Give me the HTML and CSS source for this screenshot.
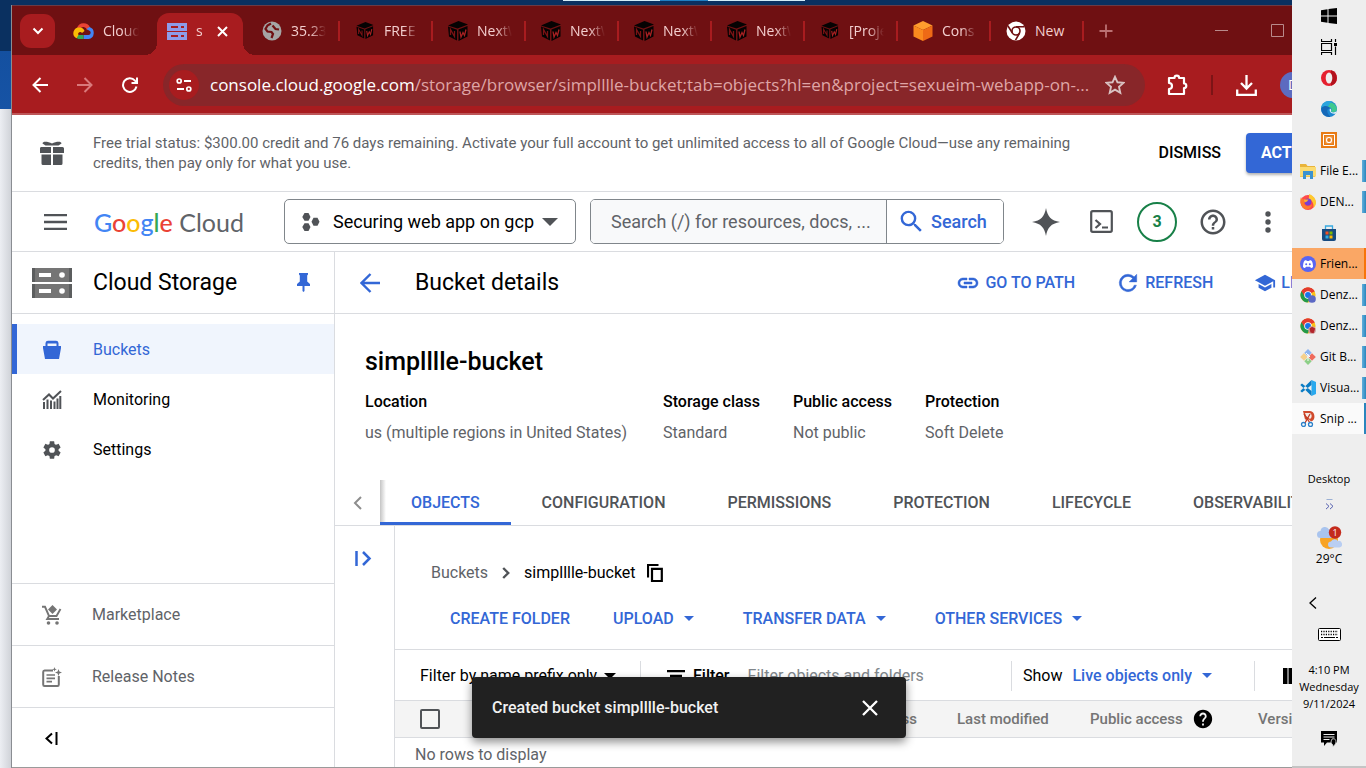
FILE: index.html
```html
<!DOCTYPE html>
<html lang="en">
<head>
<meta charset="utf-8">
<title>Bucket details – Cloud Storage</title>
<link rel="stylesheet" href="styles.css">
</head>
<body>
<svg class="defs" aria-hidden="true">
  <symbol id="nw" viewBox="0 0 20 20"><path d="M0 4.500 10.500 0 20 3.500 9.500 7.500zM0 5.500 9 8.700V19.500L1 15.500zM10.500 8.600 19.500 5V15.500L10.500 20z" fill="#050303"/><path d="M2.500 14V8.500L6.500 15.500V10" fill="none" stroke="#7a1214" stroke-width="1.300"/><path d="M12 10.500 13 16 15 11.500 16.500 14.500 18 8.500" fill="none" stroke="#a82022" stroke-width="1.300"/></symbol>
  <symbol id="drop" viewBox="0 0 10 5"><path d="M0 0h10L5 5z" fill="currentColor"/></symbol>
  <symbol id="chrome" viewBox="0 0 20 20"><circle cx="10" cy="10" r="9.500" fill="#fbc116"/><path d="M10 10 1.800 5.200A9.500 9.500 0 0 1 18.200 5.200z" fill="#e33b2e"/><path d="M10 10 1.800 5.200A9.500 9.500 0 0 0 9.500 19.500l4.100-7.400z" fill="#229a4a"/><path d="M10 5.500h8.400L18 5A9.500 9.500 0 0 0 1.800 5.200L6 12z" fill="#e33b2e"/><circle cx="10" cy="10" r="4.700" fill="#fff"/><circle cx="10" cy="10" r="3.700" fill="#1a73e8"/></symbol>
</svg>
<div class="desktop">
  <div class="peek"><i></i><i class="mid"></i><i></i></div>
  <div class="window">
    <div class="tabstrip">
      <button class="tab-search" aria-label="Search tabs"><svg width="12" height="8" viewBox="0 0 12 8"><path d="M1.500 1.500 6 6l4.500-4.500" fill="none" stroke="#fff" stroke-width="2"/></svg></button>
      <div class="tab plain"><svg width="21" height="17" viewBox="0 0 21 17"><path d="M4 6A7 7 0 0 1 17 5.500l-3 2.500a3.800 3.800 0 0 0-7-1z" fill="#ea4335"/><path d="M16.500 5A6.200 6.200 0 0 1 15.500 17H10.500V13h5a2.300 2.300 0 0 0 .5-4.500L13.500 7z" fill="#4285f4"/><path d="M10.500 17H5.500L2.500 15.500 5.500 13h5z" fill="#34a853"/><path d="M3.500 16.200A5.700 5.700 0 0 1 7 5.500a5.500 5.500 0 0 1 4.500 3.500L9 11A2 2 0 1 0 5.500 13z" fill="#fbbc05"/></svg><span>Cloud</span></div>
      <div class="tab active"><svg width="20" height="17" viewBox="0 0 20 17"><path d="M0 0h20v8H0zM0 9h20v8H0z" fill="#8e9be8"/><path d="M4 3h7v2H4zM14 3h3v2h-3zM4 12h7v2H4zM14 12h3v2h-3z" fill="#a81c1f"/></svg><span>s</span><button class="bare" aria-label="Close tab"><svg width="11" height="11" viewBox="0 0 11 11"><path d="m1 1 9 9M10 1l-9 9" stroke="#fff" stroke-width="2"/></svg></button></div>
      <div class="tab"><svg width="20" height="20" viewBox="0 0 20 20"><circle cx="10" cy="10" r="9.500" fill="#a5a5a5"/><path d="M9 2.500 5.500 4.500 3.500 8l2 2.500 4 .5 1.500 2-1.500 4M10.500 4.500l3 3.500 3.500.5" fill="none" stroke="#6f1012" stroke-width="2.200"/></svg><span>35.23</span></div>
      <div class="tab"><svg width="20" height="17"><use href="#nw"/></svg><span>FREE</span></div>
      <div class="tab"><svg width="20" height="20"><use href="#nw"/></svg><span>NextW</span></div>
      <div class="tab"><svg width="20" height="20"><use href="#nw"/></svg><span>NextW</span></div>
      <div class="tab"><svg width="20" height="20"><use href="#nw"/></svg><span>NextW</span></div>
      <div class="tab"><svg width="20" height="20"><use href="#nw"/></svg><span>NextW</span></div>
      <div class="tab"><svg width="20" height="17"><use href="#nw"/></svg><span>[Proje</span></div>
      <div class="tab"><svg width="20" height="20" viewBox="0 0 20 20"><path d="M10 0 19.500 4.500 10 9 .5 4.500z" fill="#ff9d2e"/><path d="M.5 4.500 10 9v11L.5 15.500z" fill="#fb8a1e"/><path d="M19.500 4.500 10 9v11l9.500-4.500z" fill="#ee6a16"/></svg><span>Cons</span></div>
      <div class="tab"><svg width="20" height="20" viewBox="0 0 20 20"><circle cx="10" cy="10" r="9.500" fill="#fff"/><circle cx="10" cy="10" r="4" fill="none" stroke="#6f1012" stroke-width="1.600"/><path d="M10 5.800h8.500M6.400 12 2 5M13.600 12 9.500 19.200" stroke="#6f1012" stroke-width="1.600"/></svg><span class="full">New</span></div>
      <button class="bare newtab" aria-label="New tab"><svg width="14" height="14" viewBox="0 0 14 14"><path d="M7 .5v13M.5 7h13" stroke="#bb7173" stroke-width="1.800"/></svg></button>
      <div class="winctl"><button class="bare" aria-label="Minimize"><svg width="13" height="13" viewBox="0 0 13 13"><path d="M0 6.500h13" stroke="#b98a8b"/></svg></button><button class="bare" aria-label="Maximize"><svg width="13" height="13" viewBox="0 0 13 13"><path d="M.5.5h12v12H.5z" fill="none" stroke="#b98a8b"/></svg></button></div>
    </div>
    <div class="toolbar">
      <button class="bare nav" aria-label="Back"><svg width="16" height="16" viewBox="0 0 16 16"><path d="M8.500 1 1.500 8l7 7M1.500 8H16" fill="none" stroke="#fff" stroke-width="2"/></svg></button>
      <button class="bare nav" aria-label="Forward"><svg width="16" height="16" viewBox="0 0 16 16"><path d="m7.500 1 7 7-7 7M14.500 8H0" fill="none" stroke="#d9797b" stroke-width="2"/></svg></button>
      <button class="bare nav" aria-label="Reload"><svg width="16" height="16" viewBox="0 0 16 16"><path d="M14.500 9.500A6.800 6.800 0 1 1 13 3.600L15 5.800M15 .5V6H9.500" fill="none" stroke="#fff" stroke-width="2"/></svg></button>
      <div class="omnibox">
        <button class="bare site" aria-label="Site information"><svg width="16" height="14" viewBox="0 0 16 14"><circle cx="3.200" cy="3" r="2" fill="none" stroke="#fff" stroke-width="1.700"/><circle cx="12.800" cy="11" r="2" fill="none" stroke="#fff" stroke-width="1.700"/><path d="M8 3h7M1 11h7" stroke="#fff" stroke-width="1.800"/></svg></button>
        <div class="url" role="textbox" aria-label="Address" contenteditable="true" spellcheck="false"><b>console.cloud.google.com</b>/storage/browser/simplllle-bucket;tab=objects?hl=en&amp;project=sexueim-webapp-on-...</div>
        <button class="bare" aria-label="Bookmark"><svg width="20" height="20" viewBox="0 0 20 20"><path d="m10 1.800 2.500 5.500 6 .6-4.500 4 1.300 5.900-5.300-3.100-5.300 3.100L6 11.900l-4.500-4 6-.6z" fill="none" stroke="#d9c2c2" stroke-width="1.900"/></svg></button>
      </div>
      <button class="bare" aria-label="Extensions"><svg width="22" height="22" viewBox="0 0 22 22"><path d="M2 4h5.500a2.300 2.300 0 0 1 4.600 0H17v5.500a2.300 2.300 0 0 1 0 4.600V20H2v-5a3 3 0 0 0 0-6z" fill="none" stroke="#fff" stroke-width="2.200" stroke-linejoin="round"/></svg></button>
      <i class="tsep"></i>
      <button class="bare" aria-label="Downloads"><svg width="21" height="21" viewBox="0 0 21 21"><path d="M10.500 0v13M5 8l5.500 5.500L16 8M1.200 14.500v5.300h18.600v-5.300" fill="none" stroke="#fff" stroke-width="2.300"/></svg></button>
      <button class="bare avatar" aria-label="Profile">D</button>
    </div>
    <div class="banner">
      <svg width="24" height="24" viewBox="0 0 24 24"><path d="M1 6h10v6H0V7.500A1.500 1.500 0 0 1 1 6zM13 6h9.500A1.500 1.500 0 0 1 24 7.500V12H13zM1.500 13.500H11V24H3a1.500 1.500 0 0 1-1.500-1.500zM13 13.500h9.500v9A1.500 1.500 0 0 1 21 24h-8zM2.500 2.500C2.500 0 8 .5 12 2.500 16 .5 21.500 0 21.500 2.500l-3 2h-13z" fill="#505357"/></svg>
      <p>Free trial status: $300.00 credit and 76 days remaining. Activate your full account to get unlimited access to all of Google Cloud—use any remaining credits, then pay only for what you use.</p>
      <button class="bare dismiss">DISMISS</button>
      <button class="activate">ACTIVATE</button>
    </div>
    <header class="header">
      <button class="bare burger" aria-label="Main menu"><svg width="23" height="16" viewBox="0 0 23 16"><path d="M0 1.200h23M0 8h23M0 14.800h23" stroke="#505357" stroke-width="2.300"/></svg></button>
      <a class="logo" href="#"><span class="g-b">G</span><span class="g-r">o</span><span class="g-y">o</span><span class="g-b">g</span><span class="g-g">l</span><span class="g-r">e</span> Cloud</a>
      <button class="project"><svg width="18" height="18" viewBox="0 0 18 18"><path d="M2.500 0h4L8.500 4l-2 3.800h-4L.3 4zM2.500 10.200h4l2 3.800-2 4h-4l-2.200-4zM11.500 4.800h4l2 4-2 4h-4l-2-4z" fill="#505357"/></svg><span>Securing web app on gcp</span><svg class="big" width="16" height="8"><use href="#drop"/></svg></button>
      <form class="search"><input type="text" aria-label="Search" placeholder="Search (/) for resources, docs, ..."><button type="button"><svg width="29" height="29" viewBox="0 0 24 24"><path d="M15.500 14h-.79l-.28-.27A6.471 6.471 0 0 0 16 9.500 6.500 6.500 0 1 0 9.500 16c1.610 0 3.090-.59 4.230-1.570l.27.28v.79l5 4.990L20.490 19l-4.990-5zm-6 0C7.010 14 5 11.990 5 9.500S7.010 5 9.500 5 14 7.010 14 9.500 11.990 14 9.500 14z" fill="#3367d6"/></svg>Search</button></form>
      <div class="tools">
        <button class="bare" aria-label="Gemini"><svg width="28" height="28" viewBox="0 0 28 28"><path d="M14 0c1.500 8.500 5 12.500 14 14-9 1.500-12.500 5.500-14 14C12.500 19.500 9 15.500 0 14 9 12.500 12.500 8.500 14 0z" fill="#505357"/></svg></button>
        <button class="bare" aria-label="Cloud Shell"><svg width="23" height="23" viewBox="0 0 23 23"><rect x="1.200" y="1.200" width="20.600" height="20.600" rx="1.500" fill="none" stroke="#505357" stroke-width="2.200"/><path d="m5.500 10 4.500 4-4.500 4M12 17.500h6" fill="none" stroke="#505357" stroke-width="2.200"/></svg></button>
        <button class="bare badge" aria-label="3 notifications">3</button>
        <button class="bare" aria-label="Help"><svg width="30" height="30" viewBox="0 0 24 24"><path d="M11 18h2v-2h-2v2zm1-16C6.480 2 2 6.480 2 12s4.480 10 10 10 10-4.480 10-10S17.520 2 12 2zm0 18c-4.410 0-8-3.590-8-8s3.590-8 8-8 8 3.590 8 8-3.590 8-8 8zm0-14c-2.210 0-4 1.790-4 4h2c0-1.100.9-2 2-2s2 .9 2 2c0 2-3 1.750-3 5h2c0-2.250 3-2.500 3-5 0-2.210-1.790-4-4-4z" fill="#505357"/></svg></button>
        <button class="bare" aria-label="More"><svg width="6" height="22" viewBox="0 0 6 22"><g fill="#505357"><circle cx="3" cy="3" r="2.700"/><circle cx="3" cy="11" r="2.700"/><circle cx="3" cy="19" r="2.700"/></g></svg></button>
      </div>
    </header>
    <div class="workspace">
      <aside class="sidebar">
        <div class="product"><svg width="40" height="30" viewBox="0 0 40 30"><path d="M0 0h40v14H0zM0 16h40v14H0z" fill="#757575"/><path d="M0 0h3v14H0zM37 0h3v14h-3zM0 16h3v14H0zM37 16h3v14h-3z" fill="#5b5d5e"/><path d="M7 5h12v4H7zM7 21h12v4H7z" fill="#fff"/><circle cx="30" cy="7" r="2.800" fill="#fff"/><circle cx="30" cy="23" r="2.800" fill="#fff"/></svg><h1>Cloud Storage</h1><button class="bare" aria-label="Unpin"><svg width="13" height="19" viewBox="0 0 13 19"><path d="M2 0h9v1.500l-.8 1V8.500L13 11v2H7.500v5L6.500 19l-1-1v-5H0v-2l2.800-2.500v-6L2 1.500z" fill="#3367d6"/></svg></button></div>
        <nav class="menu">
          <a href="#" class="on"><svg width="20" height="20" viewBox="0 0 20 20"><path d="M1 6h2.500V3A2.500 2.500 0 0 1 6 .8h8A2.500 2.500 0 0 1 16.500 3v3H19v2L17 19H3L1 8zM5.500 6h9V3.500h-9z" fill="#3367d6"/></svg>Buckets</a>
          <a href="#"><svg width="20" height="20" viewBox="0 0 20 20"><path d="M1 10 7 4.500l4 4L19 1" fill="none" stroke="#505357" stroke-width="2"/><path d="M2 12v7M5.500 9.500V19M9 10.500V19M12.500 11.500V19M15.500 8.500V19M18.300 6v13" stroke="#505357" stroke-width="2"/></svg>Monitoring</a>
          <a href="#"><svg width="22" height="22" viewBox="0 0 24 24"><path d="M19.140 12.940c.04-.3.060-.61.060-.94 0-.32-.02-.64-.07-.94l2.030-1.580c.18-.14.230-.41.120-.61l-1.920-3.320c-.12-.22-.37-.29-.59-.22l-2.390.96c-.5-.38-1.030-.7-1.620-.94l-.36-2.540c-.04-.24-.24-.41-.48-.41h-3.840c-.24 0-.43.170-.47.410l-.36 2.540c-.59.240-1.130.570-1.620.940l-2.390-.96c-.22-.08-.47 0-.59.220L2.740 8.870c-.12.210-.08.470.120.610l2.030 1.580c-.05.300-.09.630-.09.940s.02.640.07.940l-2.030 1.580c-.18.140-.23.410-.12.610l1.920 3.320c.12.220.37.290.59.220l2.390-.96c.5.380 1.030.7 1.620.94l.36 2.540c.05.240.24.410.48.410h3.840c.24 0 .44-.17.470-.41l.36-2.540c.59-.24 1.130-.56 1.620-.94l2.390.96c.22.08.47 0 .59-.22l1.920-3.320c.12-.22.07-.47-.12-.61l-2.010-1.580zM12 15.100a3.100 3.100 0 1 1 0-6.200 3.100 3.100 0 0 1 0 6.200z" fill="#505357"/></svg>Settings</a>
        </nav>
        <nav class="menu lower">
          <a href="#"><svg width="20" height="20" viewBox="0 0 20 20"><path d="M0 1.800h3L7 11h7.500l4-7M7 11l-1.800 3H17" fill="none" stroke="#757575" stroke-width="1.900"/><path d="M10.500 0 15 4.500 10.500 9 6 4.500z" fill="#757575"/><circle cx="6.500" cy="18" r="1.800" fill="#757575"/><circle cx="15" cy="18" r="1.800" fill="#757575"/></svg>Marketplace</a>
          <a href="#"><svg width="20" height="20" viewBox="0 0 20 20"><path d="M11 3.500H2.500Q1.200 3.500 1.200 5v12.500Q1.200 19 2.500 19h13q1.300 0 1.300-1.500V9" fill="none" stroke="#757575" stroke-width="2"/><path d="M4.500 8H13M4.500 11.300H13M4.500 14.600H10" stroke="#757575" stroke-width="1.700"/><path d="m12.500 0 .6 1.700 1.700.6-1.700.6-.6 1.700-.6-1.700-1.700-.6 1.700-.6zM16.500 2l.9 2.600L20 5.500l-2.600.9-.9 2.600-.9-2.600-2.600-.9 2.600-.9z" fill="#757575"/></svg>Release Notes</a>
          <button class="bare" aria-label="Collapse menu"><svg width="14" height="13" viewBox="0 0 14 13"><path d="M7 1.500 1.500 6.500l5.500 5M11.500 0v13" fill="none" stroke="#000" stroke-width="2"/></svg></button>
        </nav>
      </aside>
      <main class="main">
        <div class="pagebar">
          <button class="bare" aria-label="Back"><svg width="20" height="20" viewBox="0 0 20 20"><path d="m10.500 1-9 9 9 9M1.500 10H20" fill="none" stroke="#3367d6" stroke-width="2.400"/></svg></button>
          <h2>Bucket details</h2>
          <div class="pageacts">
            <button class="bare act"><svg width="24" height="24" viewBox="0 0 24 24"><path d="M3.900 12c0-1.710 1.390-3.100 3.100-3.100h4V7H7c-2.760 0-5 2.240-5 5s2.240 5 5 5h4v-1.900H7c-1.710 0-3.100-1.390-3.100-3.100zM8 13h8v-2H8v2zm9-6h-4v1.900h4c1.710 0 3.100 1.390 3.100 3.100s-1.390 3.100-3.100 3.100h-4V17h4c2.760 0 5-2.240 5-5s-2.240-5-5-5z" fill="currentColor" stroke="currentColor" stroke-width=".5"/></svg>GO TO PATH</button>
            <button class="bare act"><svg width="24" height="24" viewBox="1 1 22 22"><path d="M17.650 6.350A7.958 7.958 0 0 0 12 4a8 8 0 1 0 7.730 10h-2.080A5.990 5.990 0 0 1 12 18c-3.310 0-6-2.690-6-6s2.690-6 6-6c1.660 0 3.140.69 4.220 1.780L13 11h7V4l-2.350 2.350z" fill="currentColor" stroke="currentColor" stroke-width=".4"/></svg>REFRESH</button>
            <button class="bare act"><svg width="22" height="22" viewBox="0 0 24 24"><path d="M5 13.180v4L12 21l7-3.820v-4L12 17l-7-3.820zM12 3L1 9l11 6 9-4.910V17h2V9L12 3z" fill="currentColor"/></svg>LEARN</button>
          </div>
        </div>
        <section class="summary">
          <h3>simplllle-bucket</h3>
          <dl>
            <div><dt>Location</dt><dd>us (multiple regions in United States)</dd></div>
            <div><dt>Storage class</dt><dd>Standard</dd></div>
            <div><dt>Public access</dt><dd>Not public</dd></div>
            <div><dt>Protection</dt><dd>Soft Delete</dd></div>
          </dl>
        </section>
        <div class="tabs">
          <button class="bare prev" aria-label="Scroll tabs left"><svg width="9" height="14" viewBox="0 0 9 14"><path d="M8 1 2 7l6 6" fill="none" stroke="#8d8d8d" stroke-width="2"/></svg></button>
          <div class="tablist" role="tablist">
            <button role="tab" class="bare on" aria-selected="true">OBJECTS</button><button role="tab" class="bare">CONFIGURATION</button><button role="tab" class="bare">PERMISSIONS</button><button role="tab" class="bare">PROTECTION</button><button role="tab" class="bare">LIFECYCLE</button><button role="tab" class="bare">OBSERVABILITY</button>
          </div>
        </div>
        <div class="pane">
          <div class="rail"><button class="bare" aria-label="Show folder browser"><svg width="17" height="15" viewBox="0 0 17 15"><path d="M1.500 0v15M8 1l6.500 6.500L8 14" fill="none" stroke="#3367d6" stroke-width="2.500"/></svg></button></div>
          <div class="objects">
            <div class="crumbs"><a href="#">Buckets</a><svg width="8" height="12" viewBox="0 0 8 12"><path d="m1.200 1 5 5-5 5" fill="none" stroke="#505357" stroke-width="2.400"/></svg><span>simplllle-bucket</span><button class="bare" aria-label="Copy"><svg width="16" height="18" viewBox="0 0 16 18"><path d="M1 13.500V1h10.500M5 4.800h9.800V17H5z" fill="none" stroke="#000" stroke-width="2.200"/></svg></button></div>
            <div class="actions">
              <button class="bare act">CREATE FOLDER</button>
              <button class="bare act">UPLOAD<svg width="10" height="5"><use href="#drop"/></svg></button>
              <button class="bare act">TRANSFER DATA<svg width="10" height="5"><use href="#drop"/></svg></button>
              <button class="bare act">OTHER SERVICES<svg width="10" height="5"><use href="#drop"/></svg></button>
            </div>
            <div class="filters">
              <div class="pick prefix"><select aria-label="Filter mode"><option>Filter by name prefix only</option></select><svg width="12" height="6"><use href="#drop"/></svg></div>
              <label class="filter"><svg width="18" height="12" viewBox="0 0 18 12"><path d="M0 1.200h18M3 5.800h12M6 10.400h6" stroke="#000" stroke-width="2.200"/></svg><b>Filter</b><input type="text" placeholder="Filter objects and folders"></label>
              <div class="pick show"><label for="show">Show</label><select id="show"><option>Live objects only</option></select><svg width="10" height="5"><use href="#drop"/></svg></div>
              <button class="bare cols" aria-label="Column display"><svg width="18" height="16" viewBox="0 0 18 16"><path d="M0 0h4.500v16H0zM5.500 0h5v16h-5zM11.500 0h5v16h-5z"/></svg></button>
            </div>
            <table>
              <colgroup><col class="c-box"><col class="c-name"><col class="c-class"><col class="c-mod"><col class="c-pub"><col></colgroup>
              <thead><tr><th><input type="checkbox" aria-label="Select all"></th><th aria-label="Name"></th><th>Storage class</th><th>Last modified</th><th><span class="with-help">Public access<svg width="22" height="22" viewBox="0 0 24 24"><path d="M12 2C6.480 2 2 6.480 2 12s4.480 10 10 10 10-4.480 10-10S17.520 2 12 2zm1 17h-2v-2h2v2zm2.070-7.750l-.9.920C13.450 12.900 13 13.500 13 15h-2v-.5c0-1.100.45-2.100 1.170-2.830l1.240-1.260c.37-.36.59-.86.59-1.410 0-1.100-.9-2-2-2s-2 .9-2 2H8c0-2.210 1.790-4 4-4s4 1.790 4 4c0 .88-.36 1.680-.93 2.250z"/></svg></span></th><th>Version history</th></tr></thead>
              <tbody><tr><td colspan="6">No rows to display</td></tr></tbody>
            </table>
          </div>
        </div>
      </main>
    </div>
    <div class="toast" role="status"><span>Created bucket simplllle-bucket</span><button class="bare" aria-label="Close"><svg width="16" height="16" viewBox="0 0 16 16"><path d="m1 1 14 14M15 1 1 15" stroke="#fff" stroke-width="2.300"/></svg></button></div>
  </div>
</div>
<aside class="taskbar">
  <div class="apps">
    <button aria-label="Start" class="solo"><svg width="16" height="16" viewBox="0 0 16 16"><path d="M0 2.200 6.500 1.200V7.500H0zM7.500 1 16 0v7.500H7.500zM0 8.500h6.500v6.300L0 13.800zM7.500 8.500H16V16l-8.500-1z"/></svg></button>
    <button aria-label="Task view" class="solo"><svg width="16" height="16" viewBox="0 0 16 16"><path d="M.5 0v2.500h10V0M.5 16v-2.500h10V16M.5 4.500h10v7H.5zM14.500 0v3M14.500 7.500V16" fill="none" stroke="#000" stroke-width="1.200"/><path d="M13 4h3v3h-3z"/></svg></button>
    <button aria-label="Opera" class="solo"><svg width="16" height="16" viewBox="0 0 16 16"><circle cx="8" cy="8" r="8" fill="#e5202f"/><path d="M10 .3a8 8 0 0 1 0 15.400z" fill="#b3121d"/><ellipse cx="8" cy="8" rx="3.300" ry="5.500" fill="#eee"/></svg></button>
    <button aria-label="Edge" class="solo"><svg width="16" height="16" viewBox="0 0 16 16"><circle cx="8" cy="8" r="8" fill="#1c86d1"/><path d="M.3 7A8 8 0 0 1 16 8c0 3-3.500 4-6 2.500 1.500-1.500.5-4.500-2.500-4.500S2 6.500.3 7z" fill="#3fc98f"/><path d="M.3 7C.5 3 4 0 8 0c2 0 3 .5 4 1C8 1.500 9 4 7 5.500 4.500 5.500 2 6 .3 7z" fill="#2aa5dd"/><path d="M.3 7C3 4 8 4.500 9 7.500 5.500 7 5 12 9.500 15.800A8 8 0 0 1 .3 7z" fill="#1568b8"/><path d="M9 7.500c1.500.8 1.500 2.300.7 3 2 1.500 4.600 1 6-.5l-1 2.500C11 13.500 7.500 11 9 7.500z" fill="#e6f4f4"/></svg></button>
    <button aria-label="Processor tool" class="solo"><svg width="16" height="16" viewBox="0 0 16 16"><path d="M0 0h16v16H0z" fill="#e87b15"/><path d="M2.500 2.500h11v11h-11z" fill="none" stroke="#fff"/><path d="M4.500 4.500h7v7h-7z" fill="#f3a45a"/><circle cx="8" cy="8" r="2.500" fill="#e87b15" stroke="#fff" stroke-width="1.200"/></svg></button>
    <button class="run"><svg width="16" height="16" viewBox="0 0 16 16"><path d="M0 1h6l1.500 2H15v11H0z" fill="#e9b43a"/><path d="M0 4h16v9.500H0z" fill="#fbdb71"/><path d="M3 16V8h10v8h-3v-4H6v4z" fill="#3b92cf"/></svg><span>File E...</span></button>
    <button class="run"><svg width="16" height="16" viewBox="0 0 16 16"><circle cx="8" cy="8.500" r="7.500" fill="#ff4a4a"/><path d="M9 0c3 1 7 4 7 8.500 0 2-1 4-2.500 5.500C14 9 12 6 8.500 4.500 9.500 3 9 1 9 0z" fill="#ffc92f"/><path d="M1 3c0 2 2 2.500 5 3L4 9c1 4 6 4 8 1 0 4-4 6-7 5S-1 8 1 3z" fill="#ff7a2a"/><circle cx="8" cy="8" r="3.400" fill="#7a3fd0"/><path d="M4 5.500h4.500L7 7.500 4.500 8.500z" fill="#ffb02e"/></svg><span>DEN...</span></button>
    <button aria-label="Store" class="solo"><svg width="16" height="16" viewBox="0 0 16 16"><path d="M1 4h14v10q0 2-2 2H3q-2 0-2-2z" fill="#174b80"/><path d="M4.500 4V1h7v3" fill="none" stroke="#38a9e0" stroke-width="1.300"/><path d="M4.500 6.500h3v3h-3z" fill="#f25022"/><path d="M8.500 6.500h3v3h-3z" fill="#7fba00"/><path d="M4.500 10.500h3v3h-3z" fill="#29abe2"/><path d="M8.500 10.500h3v3h-3z" fill="#ffb900"/></svg></button>
    <button class="run alert"><svg width="16" height="16" viewBox="0 0 16 16"><circle cx="8" cy="8" r="8" fill="#5865f2"/><path d="M3 11c0-3 .5-5 1.500-6.200C6 4 6.500 4.200 7 5h2c.5-.8 1-1 2.500-.2C12.500 6 13 8 13 11c-1 1-2 1.200-2.500.5L10 10.700H6l-.5.8C5 12.200 4 12 3 11z" fill="#fff"/><circle cx="6.200" cy="8.300" r="1" fill="#5865f2"/><circle cx="9.800" cy="8.300" r="1" fill="#5865f2"/></svg><span>Frien...</span></button>
    <button class="run"><svg width="16" height="16" viewBox="0 0 20 20"><use href="#chrome" width="20" height="20"/><circle cx="15" cy="15" r="4.800" fill="#5b68c4"/></svg><span>Denz...</span></button>
    <button class="run"><svg width="16" height="16" viewBox="0 0 20 20"><use href="#chrome" width="20" height="20"/><circle cx="15" cy="15" r="4.800" fill="#c99"/><path d="m12 13 3-2 4 2-2 6-4-1z" fill="#b3252b"/></svg><span>Denz...</span></button>
    <button class="run"><svg width="16" height="16" viewBox="0 0 16 16"><path d="m8 0 3.700 3.700L8 7.400 4.300 3.700z" fill="#8cb4f0"/><path d="m4 4 3.700 4L4 11.700.2 8z" fill="#f5d08c"/><path d="M12 4.300 15.800 8 12 11.700 8.300 8z" fill="#ef6a5c"/><path d="M8 8.600 11.700 12.300 8 16 4.300 12.300z" fill="#8dcf87"/><path d="m6 4 4 4M8 5v7" stroke="#fff"/></svg><span>Git B...</span></button>
    <button class="run"><svg width="16" height="16" viewBox="0 0 16 16"><path d="M11.500 0 16 2v12l-4.500 2z" fill="#29a9ee"/><path d="M11.500 0v5L2 12.500.3 11zM11.500 16v-5L2 3.500.3 5z" fill="#0a7cc4"/></svg><span>Visua...</span></button>
    <button class="run front"><svg width="16" height="16" viewBox="0 0 16 16"><path d="M3 0h7a5.500 5.500 0 0 1 1 10.500L9 8.500H5z" fill="#d04a2c"/><path d="M5 2h5a3.500 3.500 0 0 1 0 6L6 5z" fill="#f3e9e4"/><path d="m4 3 6 9M10 3 5 12" stroke="#c23a22" stroke-width="1.300"/><circle cx="3.500" cy="13.500" r="2" fill="none" stroke="#2b80c9" stroke-width="1.300"/><circle cx="10.500" cy="13.500" r="2" fill="none" stroke="#2b80c9" stroke-width="1.300"/></svg><span>Snip ...</span></button>
  </div>
  <div class="tray">
    <span>Desktop</span>
    <button class="bare more" aria-label="More toolbars"><svg width="9" height="11" viewBox="0 0 9 11"><path d="M1.500.5h6" stroke="#9bb0d4"/><path d="m1 4.500 3 2.800-3 2.800M5 4.500l3 2.800-3 2.800" fill="none" stroke="#5560b0"/></svg></button>
    <svg class="weather" width="25" height="24" viewBox="0 0 25 24"><circle cx="12" cy="14" r="9" fill="#f8a325"/><path d="M3.500 12a3.500 3.500 0 0 1 0-7A4.500 4.500 0 0 1 12 3.500 4.200 4.200 0 0 1 14 12z" fill="#a9c4ee"/><path d="M14 21.500a3 3 0 0 1 0-6 4 4 0 0 1 7-.5 3.300 3.300 0 0 1 1.500 6.500z" fill="#b9cef2"/><circle cx="18" cy="6.500" r="6.200" fill="#c42b1c"/><text x="18" y="10" fill="#fff" font-size="9" text-anchor="middle">1</text></svg>
    <span class="temp">29°C</span>
    <button class="bare chev" aria-label="Show hidden icons"><svg width="8" height="12" viewBox="0 0 8 12"><path d="M7 .5 1 6l6 5.500" fill="none" stroke="#000" stroke-width="1.300"/></svg></button>
    <svg class="kbd" width="23" height="13" viewBox="0 0 23 13"><rect x=".5" y=".5" width="22" height="12" rx="1" fill="#fff" stroke="#000"/><path d="M3 3.500h17M3 6.500h17" stroke="#000" stroke-width="1.300" stroke-dasharray="1.200 1.200"/><path d="M3 9.500h2M6 9.500h11M18 9.500h2" stroke="#000"/></svg>
    <time>4:10 PM<br>Wednesday<br>9/11/2024</time>
    <svg class="notif" width="16" height="17" viewBox="0 0 16 17"><path d="M0 0h16v11.500H6L3 15v-3.500H0z"/><path d="M2.500 3.500h11M2.500 6h11M2.500 8.500h6" stroke="#eee"/><path d="M11 8c3-1 4 1 4 3s-2 4.500-4 5c1.500-1.500 1-2 0-3s-1.500-2 0-5z" stroke="#eee" stroke-width=".8"/></svg>
  </div>
</aside>
</body>
</html>
```
FILE: styles.css
```css
* { box-sizing: border-box; }
body {
  margin: 0;
  height: 100vh;
  display: flex;
  overflow: hidden;
  font: 16px/20px Roboto, sans-serif;
  color: #000;
}
h1, h2, h3, p, dl, dd { margin: 0; }
a { color: inherit; text-decoration: none; }
svg { flex: none; display: block; }
button, input, select { font: inherit; color: inherit; }
button { cursor: pointer; }
.defs { position: absolute; width: 0; height: 0; }
.bare {
  border: 0;
  padding: 0;
  background: none;
  display: flex;
  align-items: center;
  justify-content: center;
  flex: none;
  white-space: nowrap;
}

/* Desktop behind the browser window */
.desktop {
  position: relative;
  flex: 1;
  min-width: 0;
  padding: 5px 0 0 12px;
  background:
    linear-gradient(#1450a0, #1653a5) 0 51px / 12px 58px no-repeat,
    linear-gradient(90deg, #eceef3, #cdd0d6) 0 109px / 12px 100% no-repeat,
    #0a3060;
}
.peek {
  position: absolute;
  top: 0;
  left: 563px;
  display: flex;
  height: 1px;
}
.peek i { width: 97px; background: #d3ecf8; }
.peek .mid { width: 48px; background: #1f7fc2; }
.window {
  position: relative;
  display: flex;
  flex-direction: column;
  height: 100%;
  overflow: hidden;
  background: #fff;
  border-bottom: 1px solid #9a9a9a;
  box-shadow: -1px 0 #8a8d92;
}

/* Browser chrome */
.tabstrip, .toolbar, .url, .taskbar { font-family: "Open Sans", "Noto Sans", sans-serif; }
.tabstrip {
  flex: none;
  display: flex;
  align-items: center;
  height: 50px;
  padding-left: 8px;
  background: #6f1012;
  border-top: 1px solid #6b3a45;
}
.tab-search {
  display: flex;
  align-items: center;
  justify-content: center;
  width: 35px;
  height: 34px;
  margin-right: 3px;
  border: 0;
  border-radius: 11px;
  background: #a81c1f;
  flex: none;
}
.tab {
  position: relative;
  display: flex;
  align-items: center;
  gap: 9px;
  width: 93px;
  height: 20px;
  padding: 0 12px 0 15px;
  flex: none;
  font-size: 14px;
  color: #f3cfcf;
  border-right: 2px solid #a81c1f;
}
.tab span {
  flex: 1;
  min-width: 0;
  overflow: hidden;
  white-space: nowrap;
  -webkit-mask-image: linear-gradient(90deg, #000 55%, transparent);
  mask-image: linear-gradient(90deg, #000 55%, transparent);
}
.tab .full { -webkit-mask-image: none; mask-image: none; }
.tab.plain { border: 0; }
.tab.active {
  align-self: flex-end;
  width: 86px;
  height: 42px;
  margin: 0 4px 0 6px;
  padding: 0 15px 6px 10px;
  border: 0;
  border-radius: 12px 12px 0 0;
  background: #a81c1f;
}
.tab.active::before, .tab.active::after {
  content: "";
  position: absolute;
  bottom: 0;
  width: 12px;
  height: 12px;
}
.tab.active::before { left: -12px; background: radial-gradient(circle at 0 0, transparent 12px, #a81c1f 12px); }
.tab.active::after { right: -12px; background: radial-gradient(circle at 100% 0, transparent 12px, #a81c1f 12px); }
.newtab { margin-left: 15px; }
.winctl { display: flex; gap: 43px; margin-left: auto; padding-right: 8px; }
.toolbar {
  flex: none;
  display: flex;
  align-items: center;
  height: 60px;
  padding: 2px 0 0 5px;
  background: #a81c1f;
  border-bottom: 2px solid #bd5658;
}
.nav { width: 45px; height: 40px; }
.omnibox {
  display: flex;
  align-items: center;
  flex: 1;
  min-width: 0;
  height: 42px;
  margin: 0 22px 0 11px;
  padding: 0 20px 0 6px;
  border-radius: 21px;
  background: #882629;
}
.site { width: 30px; height: 30px; border-radius: 15px; background: #a81c1f; }
.url {
  flex: 1;
  min-width: 0;
  margin: 0 6px 0 11px;
  font-size: 17px;
  line-height: 24px;
  color: #dfa5a6;
  white-space: nowrap;
  overflow: hidden;
  outline: 0;
}
.url b { font-weight: 400; color: #fff; }
.tsep { width: 2px; height: 20px; margin: 0 23px 0 22px; background: #7c1416; }
.avatar {
  width: 26px;
  height: 26px;
  margin: 0 -14px 0 23px;
  border-radius: 13px;
  background: #5c6bc0;
  color: #fff;
  font-size: 14px;
}

/* Trial banner */
.banner {
  flex: none;
  display: flex;
  align-items: center;
  height: 77px;
  padding-left: 28px;
  border-bottom: 1px solid #dadce0;
}
.banner p {
  flex: 1;
  max-width: 1000px;
  margin: 0 auto 0 29px;
  font-size: 15px;
  color: #5f6368;
}
.dismiss { margin: 0 25px 0 40px; font-weight: 500; }
.activate {
  flex: none;
  width: 106px;
  height: 40px;
  margin-right: -60px;
  padding: 0 15px;
  border: 0;
  border-radius: 4px;
  background: #3367d6;
  color: #fff;
  font-weight: 700;
  text-align: left;
  box-shadow: 0 2px 3px rgba(0, 0, 0, .3);
}

/* Console header */
.header {
  flex: none;
  display: flex;
  align-items: center;
  height: 60px;
  padding-left: 32px;
  border-bottom: 1px solid #dadce0;
}
.logo {
  width: 190px;
  margin-left: 27px;
  font: 25px/32px Lato, sans-serif;
  color: #5f6368;
  white-space: nowrap;
}
.g-b { color: #4285f4; }
.g-r { color: #ea4335; }
.g-y { color: #fbbc05; }
.g-g { color: #34a853; }
.logo span { font-weight: 500; }
.project, .search { flex: none; height: 45px; border: 1px solid #80868b; border-radius: 5px; }
.project {
  display: flex;
  align-items: center;
  width: 292px;
  padding: 0 17px;
  background: #fff;
  font-size: 18px;
  text-align: left;
}
.project span { flex: 1; margin-left: 13px; white-space: nowrap; }
.big { color: #505357; }
.search {
  display: flex;
  width: 414px;
  margin-left: 14px;
  overflow: hidden;
  font-size: 18px;
}
.search input {
  flex: 1;
  min-width: 0;
  padding: 0 4px 0 20px;
  border: 0;
  background: #f8f9fa;
  text-overflow: ellipsis;
}
.search input::placeholder { color: #5f6368; opacity: 1; }
.search button {
  display: flex;
  align-items: center;
  gap: 5px;
  width: 117px;
  padding: 0 10px;
  border: 0;
  border-left: 1px solid #80868b;
  background: #fff;
  color: #3367d6;
  font-weight: 500;
}
.tools {
  flex: 1;
  display: flex;
  justify-content: space-between;
  align-items: center;
  padding: 0 4px 0 22px;
}
.tools button { width: 40px; height: 40px; }
.badge {
  border: 2px solid #188048;
  border-radius: 20px;
  color: #188048;
  font-weight: 700;
}

/* Workspace */
.workspace { flex: 1; min-height: 0; display: flex; }
.sidebar {
  flex: none;
  display: flex;
  flex-direction: column;
  width: 323px;
  border-right: 1px solid #dadce0;
}
.product, .pagebar {
  flex: none;
  display: flex;
  align-items: center;
  height: 62px;
  border-bottom: 1px solid #dadce0;
}
.product { padding: 0 24px 0 20px; }
h1, h2 { font-size: 23px; line-height: 28px; font-weight: 400; white-space: nowrap; }
h1 { flex: 1; margin-left: 21px; }
.menu { padding-top: 10px; }
.menu a {
  display: grid;
  grid-template-columns: 22px 1fr;
  align-items: center;
  justify-items: start;
  column-gap: 30px;
  height: 50px;
  padding: 2px 0 0 29px;
}
.menu svg { justify-self: center; }
.menu .on { color: #3367d6; background: #f0f5fd; box-shadow: inset 5px 0 #3367d6; }
.menu.lower { margin-top: auto; padding: 0; }
.lower a, .lower button { height: 62px; border-top: 1px solid #dadce0; color: #5f6368; column-gap: 29px; }
.menu.lower a { padding-top: 0; }
.lower button { width: 100%; height: 60px; padding: 2px 0 0 33px; justify-content: flex-start; }
.main { flex: 1; min-width: 0; display: flex; flex-direction: column; }
.pagebar { padding-left: 25px; }
h2 { flex: 1; margin-left: 35px; }
.act { gap: 5px; color: #3367d6; font-weight: 500; }
.pageacts { display: flex; gap: 41px; margin-right: -39px; }
.summary { flex: none; padding: 32px 0 0 30px; height: 166px; }
h3 { font-size: 25px; line-height: 32px; font-weight: 500; }
.summary dl {
  display: grid;
  grid-template-columns: 298px 130px 132px auto;
  margin-top: 14px;
  white-space: nowrap;
}
.summary dt { font-weight: 500; margin-bottom: 11px; }
.summary dd { color: #5f6368; }
.tabs { flex: none; display: flex; height: 46px; border-bottom: 1px solid #dadce0; }
.prev { width: 45px; }
.tablist {
  flex: 1;
  min-width: 0;
  display: flex;
  overflow: hidden;
  background: linear-gradient(90deg, #c4c4c4, #fff) 0 0 / 6px 100% no-repeat;
}
.tablist button { padding: 0 31px; color: #505357; font-weight: 500; border-bottom: 3px solid transparent; border-top: 3px solid transparent; }
.tablist .on { color: #3367d6; border-bottom-color: #3367d6; }
.pane { flex: 1; min-height: 0; display: flex; }
.rail { flex: none; width: 60px; padding: 25px 0 0 20px; border-right: 1px solid #dadce0; }
.objects { flex: 1; min-width: 0; overflow: hidden; }
.crumbs { display: flex; align-items: center; gap: 14px; padding: 37px 0 0 36px; }
.crumbs a { color: #5f6368; }
.crumbs button { margin-left: -3px; }
.actions { display: flex; height: 67px; padding: 5px 0 0 55px; gap: 43px; border-bottom: 1px solid #dadce0; }
.actions .act { gap: 10px; padding-right: 6px; }
.actions .act:first-child { padding-right: 0; }
.filters { display: flex; align-items: center; height: 50px; padding-top: 1px; }
.pick, .filter { flex: none; display: flex; align-items: center; height: 30px; }
.pick select {
  appearance: none;
  padding: 0;
  border: 0;
  background: none;
}
.pick svg { pointer-events: none; }
.prefix { width: 246px; padding-left: 25px; gap: 6px; border-right: 1px solid #dadce0; }
.filter { flex: 1; min-width: 0; padding-left: 26px; gap: 8px; }
.filter b { font-weight: 500; }
.filter input { flex: 1; min-width: 0; margin-left: 10px; padding: 0; border: 0; }
.filter input::placeholder { color: #80868b; opacity: 1; }
.show { width: 244px; padding-left: 11px; gap: 10px; border: solid #dadce0; border-width: 0 1px; }
.show select { color: #3367d6; font-weight: 500; }
.show svg { color: #3367d6; }
.cols { margin: 0 -9px 0 28px; }
table { width: 100%; table-layout: fixed; border-collapse: collapse; white-space: nowrap; }
th, td { padding: 0 0 0 15px; overflow: hidden; text-align: left; }
th {
  height: 37px;
  background: #f4f4f4;
  border: solid #dadce0;
  border-width: 1px 0;
  font-size: 15px;
  font-weight: 500;
  color: #757575;
}
th:first-child { padding-left: 25px; }
th input {
  appearance: none;
  display: block;
  width: 20px;
  height: 20px;
  margin: 0;
  border: 2px solid #505357;
  border-radius: 2px;
}
.with-help { display: flex; align-items: center; gap: 9px; }
.with-help svg { fill: #000; }
td { height: 34px; padding-left: 20px; color: #5f6368; }
.c-box { width: 61px; }
.c-name { width: 355px; }
.c-class { width: 131px; }
.c-mod { width: 133px; }
.c-pub { width: 168px; }

.toast {
  position: absolute;
  left: 460px;
  bottom: 29px;
  display: flex;
  align-items: center;
  justify-content: space-between;
  width: 434px;
  height: 61px;
  padding: 0 28px 0 20px;
  border-radius: 4px;
  background: #212121;
  color: #f1f1f1;
  font-weight: 500;
  box-shadow: 0 4px 10px rgba(0, 0, 0, .45);
}

/* Taskbar */
.taskbar {
  flex: none;
  width: 74px;
  background: #eee;
  border-bottom: 2px solid #c4c4c4;
  font-size: 12px;
  line-height: 17px;
}
.apps button {
  display: flex;
  align-items: center;
  gap: 4px;
  width: 100%;
  height: 31px;
  padding: 0 0 0 8px;
  border: 0;
  background: none;
  white-space: nowrap;
}
.apps .solo { justify-content: center; padding: 0; }
.apps .run {
  background: linear-gradient(90deg, #62b0dd, #2a86bd) right center / 4px 22px no-repeat;
}
.apps .front { background: linear-gradient(#2a86bd, #2a86bd) right / 2px 100% no-repeat, #fafafa; }
.apps .alert { background: linear-gradient(#f7740a, #f7740a) right / 2px 100% no-repeat, #faa765; }
.tray {
  display: flex;
  flex-direction: column;
  align-items: center;
  padding-top: 36px;
  font-size: 11px;
}
.more { margin-top: 12px; }
.weather { margin-top: 16px; }
.temp { font-size: 12px; }
.chev { align-self: flex-start; margin: 30px 0 0 17px; }
.kbd { margin-top: 19px; }
.tray time { margin-top: 20px; text-align: center; }
.notif { margin-top: 19px; }
```
